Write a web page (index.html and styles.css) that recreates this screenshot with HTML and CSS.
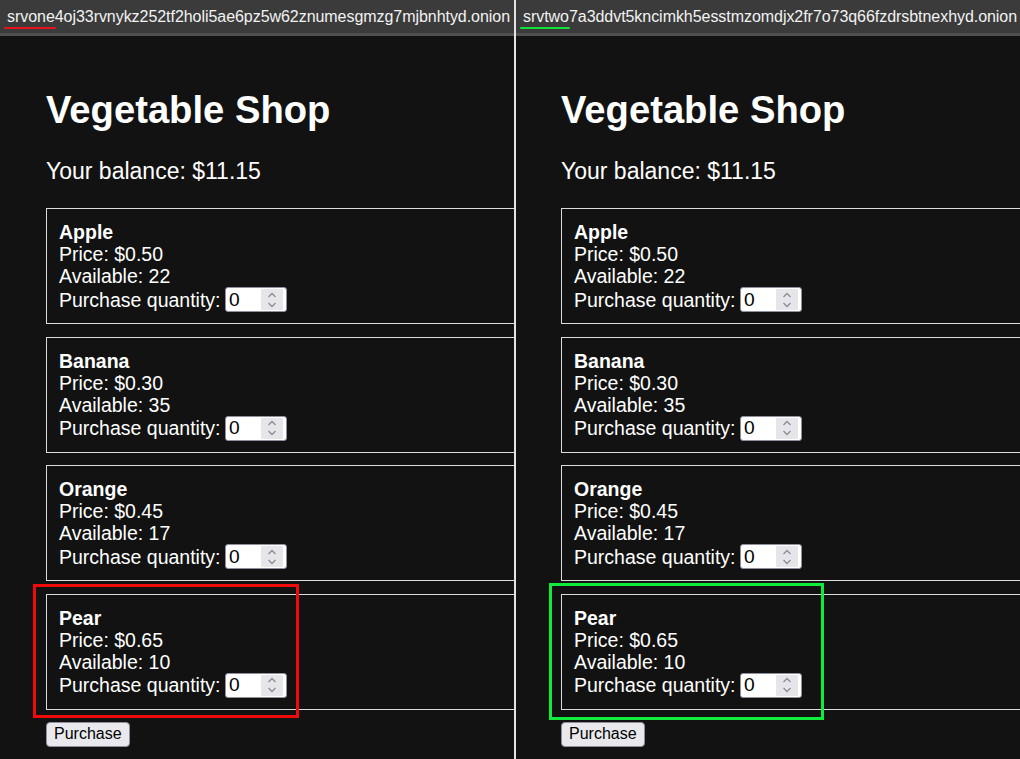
FILE: index.html
```html
<!DOCTYPE html>
<html lang="en">
<head>
<meta charset="utf-8">
<title>Vegetable Shop</title>
<link rel="stylesheet" href="styles.css">
</head>
<body>
<div class="split">
  <section class="pane pane-left">
    <div class="addr-bar"><span class="addr"><span class="host-tag tag-red">srvone</span>4oj33rvnykz252tf2holi5ae6pz5w62znumesgmzg7mjbnhtyd.onion</span></div>
    <main class="shop">
      <h1 class="shop-title">Vegetable Shop</h1>
      <p class="balance">Your balance: $11.15</p>
      <div class="item">
        <strong class="item-name">Apple</strong>
        <div class="item-line">Price: $0.50</div>
        <div class="item-line">Available: 22</div>
        <div class="qty-row">Purchase quantity: <span class="num-input"><span class="num-value">0</span><span class="spin"><svg viewBox="0 0 12 22" width="12" height="22"><path d="M2.5 8 L6 4.5 L9.5 8 M2.5 14 L6 17.5 L9.5 14" fill="none" stroke="#8c8c94" stroke-width="1.3"/></svg></span></span></div>
      </div>
      <div class="item">
        <strong class="item-name">Banana</strong>
        <div class="item-line">Price: $0.30</div>
        <div class="item-line">Available: 35</div>
        <div class="qty-row">Purchase quantity: <span class="num-input"><span class="num-value">0</span><span class="spin"><svg viewBox="0 0 12 22" width="12" height="22"><path d="M2.5 8 L6 4.5 L9.5 8 M2.5 14 L6 17.5 L9.5 14" fill="none" stroke="#8c8c94" stroke-width="1.3"/></svg></span></span></div>
      </div>
      <div class="item">
        <strong class="item-name">Orange</strong>
        <div class="item-line">Price: $0.45</div>
        <div class="item-line">Available: 17</div>
        <div class="qty-row">Purchase quantity: <span class="num-input"><span class="num-value">0</span><span class="spin"><svg viewBox="0 0 12 22" width="12" height="22"><path d="M2.5 8 L6 4.5 L9.5 8 M2.5 14 L6 17.5 L9.5 14" fill="none" stroke="#8c8c94" stroke-width="1.3"/></svg></span></span></div>
      </div>
      <div class="item">
        <strong class="item-name">Pear</strong>
        <div class="item-line">Price: $0.65</div>
        <div class="item-line">Available: 10</div>
        <div class="qty-row">Purchase quantity: <span class="num-input"><span class="num-value">0</span><span class="spin"><svg viewBox="0 0 12 22" width="12" height="22"><path d="M2.5 8 L6 4.5 L9.5 8 M2.5 14 L6 17.5 L9.5 14" fill="none" stroke="#8c8c94" stroke-width="1.3"/></svg></span></span></div>
      </div>
      <button class="buy-btn" type="button">Purchase</button>
    </main>
    <div class="mark mark-red"></div>
  </section>
  <div class="divider"></div>
  <section class="pane pane-right">
    <div class="addr-bar"><span class="addr"><span class="host-tag tag-green">srvtwo</span>7a3ddvt5kncimkh5esstmzomdjx2fr7o73q66fzdrsbtnexhyd.onion</span></div>
    <main class="shop">
      <h1 class="shop-title">Vegetable Shop</h1>
      <p class="balance">Your balance: $11.15</p>
      <div class="item">
        <strong class="item-name">Apple</strong>
        <div class="item-line">Price: $0.50</div>
        <div class="item-line">Available: 22</div>
        <div class="qty-row">Purchase quantity: <span class="num-input"><span class="num-value">0</span><span class="spin"><svg viewBox="0 0 12 22" width="12" height="22"><path d="M2.5 8 L6 4.5 L9.5 8 M2.5 14 L6 17.5 L9.5 14" fill="none" stroke="#8c8c94" stroke-width="1.3"/></svg></span></span></div>
      </div>
      <div class="item">
        <strong class="item-name">Banana</strong>
        <div class="item-line">Price: $0.30</div>
        <div class="item-line">Available: 35</div>
        <div class="qty-row">Purchase quantity: <span class="num-input"><span class="num-value">0</span><span class="spin"><svg viewBox="0 0 12 22" width="12" height="22"><path d="M2.5 8 L6 4.5 L9.5 8 M2.5 14 L6 17.5 L9.5 14" fill="none" stroke="#8c8c94" stroke-width="1.3"/></svg></span></span></div>
      </div>
      <div class="item">
        <strong class="item-name">Orange</strong>
        <div class="item-line">Price: $0.45</div>
        <div class="item-line">Available: 17</div>
        <div class="qty-row">Purchase quantity: <span class="num-input"><span class="num-value">0</span><span class="spin"><svg viewBox="0 0 12 22" width="12" height="22"><path d="M2.5 8 L6 4.5 L9.5 8 M2.5 14 L6 17.5 L9.5 14" fill="none" stroke="#8c8c94" stroke-width="1.3"/></svg></span></span></div>
      </div>
      <div class="item">
        <strong class="item-name">Pear</strong>
        <div class="item-line">Price: $0.65</div>
        <div class="item-line">Available: 10</div>
        <div class="qty-row">Purchase quantity: <span class="num-input"><span class="num-value">0</span><span class="spin"><svg viewBox="0 0 12 22" width="12" height="22"><path d="M2.5 8 L6 4.5 L9.5 8 M2.5 14 L6 17.5 L9.5 14" fill="none" stroke="#8c8c94" stroke-width="1.3"/></svg></span></span></div>
      </div>
      <button class="buy-btn" type="button">Purchase</button>
    </main>
    <div class="mark mark-green"></div>
  </section>
</div>
</body>
</html>
```
FILE: styles.css
```css
* {
  box-sizing: border-box;
}

html, body {
  margin: 0;
  padding: 0;
  background: #121212;
}

body {
  width: 1020px;
  height: 759px;
  overflow: hidden;
  font-family: "Liberation Sans", Arial, sans-serif;
  color: #fff;
}

.split {
  display: flex;
  height: 759px;
}

.pane {
  position: relative;
  overflow: hidden;
  display: flex;
  flex-direction: column;
  background: #121212;
}

.pane-left {
  width: 514px;
  flex: 0 0 514px;
}

.pane-right {
  flex: 1 1 auto;
}

.divider {
  flex: 0 0 2px;
  background: #e4e4e4;
}

/* address strip above each window */
.addr-bar {
  height: 36px;
  flex: 0 0 36px;
  background: #3b3b3b;
  border-bottom: 3px solid #4f4f4f;
  display: flex;
  align-items: center;
  padding: 1px 0 0 7px;
  white-space: nowrap;
}

.addr {
  font-size: 16px;
  color: #f2f2f2;
  letter-spacing: -0.05px;
}

.host-tag {
  position: relative;
}

.host-tag::after {
  content: "";
  position: absolute;
  left: -3px;
  right: -1px;
  bottom: -4px;
  height: 2.5px;
  border-radius: 1px;
}

.tag-red::after {
  background: #e8121a;
}

.tag-green::after {
  background: #14e03a;
}

/* shop page */
.shop {
  padding: 52px 0 0 46px;
  font-size: 19.5px;
}

.pane-right .shop {
  padding-left: 45px;
}

.shop-title {
  margin: 0;
  font-size: 38.2px;
  line-height: 44px;
  font-weight: 700;
}

.balance {
  margin: 26px 0 0;
  font-size: 23px;
  line-height: 26px;
}

.item {
  width: 640px;
  margin-top: 24px;
  border: 1px solid #dcdcdc;
  padding: 12px 12px 11px 12px;
  line-height: 22px;
}

.item + .item {
  margin-top: 12.6px;
}

.item-name {
  display: block;
  font-weight: 700;
}

.qty-row {
  display: flex;
  align-items: center;
  height: 25px;
  white-space: pre;
}

.num-input {
  display: inline-flex;
  align-items: center;
  width: 62px;
  height: 25px;
  margin-left: -1px;
  background: #fff;
  border: 1px solid #8f8f9d;
  border-radius: 3px;
  color: #000;
  padding: 1px 3px 1px 3px;
}

.num-value {
  flex: 1 1 auto;
  font-size: 19.2px;
  line-height: 20px;
}

.spin {
  display: flex;
  align-items: center;
  justify-content: center;
  width: 22px;
  height: 21px;
  background: #e6e6ea;
  border-radius: 1px;
}

.buy-btn {
  display: block;
  margin-top: 12px;
  height: 25px;
  padding: 0 7px;
  font-family: "Liberation Sans", Arial, sans-serif;
  font-size: 16px;
  color: #000;
  background: #e9e9ed;
  border: 1px solid #8f8f9d;
  border-radius: 4px;
}

/* highlight frames around the last item */
.mark {
  position: absolute;
  border-style: solid;
  border-width: 3px;
  pointer-events: none;
}

.mark-red {
  left: 33px;
  top: 584px;
  width: 266px;
  height: 134px;
  border-color: #f00a0a;
}

.mark-green {
  left: 33px;
  top: 583px;
  width: 275px;
  height: 137px;
  border-color: #10ec3c;
}
```
